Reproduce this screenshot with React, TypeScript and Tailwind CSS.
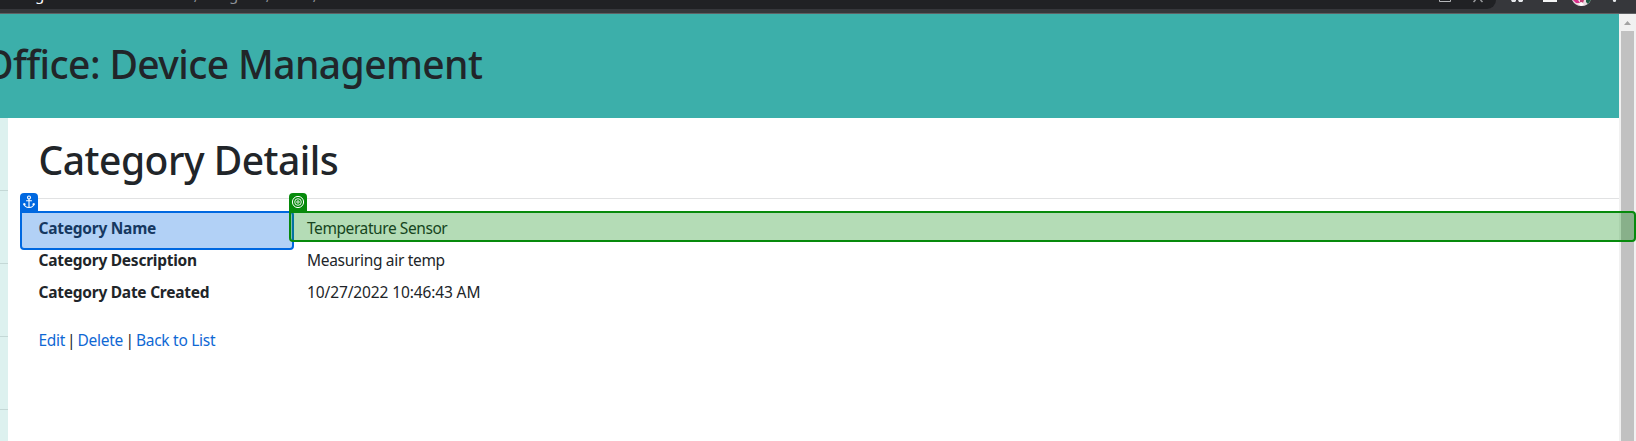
const rows = [
  { label: 'Category Name', value: 'Temperature Sensor', tracking: 'tracking-[-0.42px]' },
  { label: 'Category Description', value: 'Measuring air temp', tracking: 'tracking-[-0.32px]' },
  { label: 'Category Date Created', value: '10/27/2022 10:46:43 AM', tracking: 'tracking-[-0.12px]' },
];

function BrowserBar() {
  return (
    <div className="relative h-[14px] w-full shrink-0 overflow-hidden border-b border-[#5f6164] bg-[#36373b]">
      <div className="h-[9px] w-[1496px] rounded-br-[12px] bg-[#202124]" />
      <span className="absolute left-[35px] top-[-15px] text-[15px] leading-[18px] text-white">g</span>
      <span className="absolute left-[194px] top-[-12px] text-[14px] leading-[18px] text-[#8f9297]">/</span>
      <span className="absolute left-[229px] top-[-15px] text-[15px] leading-[18px] text-[#8f9297]">g</span>
      <span className="absolute left-[266px] top-[-12px] text-[14px] leading-[18px] text-[#8f9297]">/</span>
      <span className="absolute left-[313px] top-[-12px] text-[14px] leading-[18px] text-[#8f9297]">/</span>
      <svg className="absolute left-[1400px] top-0" width="236" height="13" viewBox="0 0 236 13">
        <path d="M39.5 0V1.5H50.5V0" fill="none" stroke="#b4b6b9" />
        <path d="M73.500 2L75.500 0M82.500 2L80.500 0" fill="none" stroke="#9a9c9f" strokeWidth="1.500" />
        <path d="M111 0H116V1L115 2H112ZM118 0H123V1L122 2H119Z" fill="#e8eaed" />
        <path d="M143 0H157V2H143Z" fill="#f4f5f6" />
        <path d="M172 0H191Q188 6 181.500 6Q175 6 172 0Z" fill="#e8d9df" />
        <path d="M173 0H178L180 3L176 3Z" fill="#d92f8b" />
        <path d="M180 0H184L183 3L180 2Z" fill="#c33b72" />
        <path d="M186 0H191L188 4L186 2Z" fill="#1d5a42" />
        <path d="M178 4L182 2L184 5L181 6Z" fill="#fff" />
        <circle cx="214.500" cy="0.500" r="1.600" fill="#e8eaed" />
      </svg>
    </div>
  );
}

function AnchorIcon() {
  return (
    <svg width="14" height="14" viewBox="0 0 14 14" fill="none" stroke="#fff" strokeWidth="1.100" strokeLinecap="round" strokeLinejoin="round">
      <circle cx="7" cy="2.500" r="1.500" />
      <path d="M7 4V12.500M4.500 5.700H9.500M2 8.500C2.300 11 4.500 12.500 7 12.500S11.700 11 12 8.500M1.700 9.700L2 8.500L3.200 9.200M12.300 9.700L12 8.500L10.800 9.200" />
    </svg>
  );
}

function TargetIcon() {
  return (
    <svg width="14" height="14" viewBox="0 0 14 14" fill="none" stroke="#fff">
      <circle cx="7" cy="7" r="5.600" strokeWidth="1" />
      <circle cx="7" cy="7" r="3.300" strokeWidth="0.900" />
      <circle cx="7" cy="7" r="1.200" strokeWidth="0.900" />
    </svg>
  );
}

export default function App() {
  return (
    <div className="relative flex h-[441px] w-[1636px] flex-col overflow-hidden bg-white font-['Noto_Sans',sans-serif] text-[15.5px] text-[#212529]">
      <BrowserBar />
      <div className="flex min-h-0 flex-1">
        <div className="flex min-w-0 flex-1 flex-col">
          <header className="flex h-[104px] shrink-0 items-start overflow-hidden bg-[#3cafaa]">
            <h1 className="-ml-[17px] mt-[26px] whitespace-nowrap text-[39px] font-medium leading-[48px] tracking-[-0.6px]">
              Office: Device Management
            </h1>
          </header>
          <div className="flex min-h-0 flex-1">
            <aside className="w-2 shrink-0 overflow-hidden bg-[#ddf1ef] pt-[72px]">
              {[0, 1, 2, 3].map((n) => (
                <div key={n} className="mb-[72px] h-px bg-[#c4d8d6]" />
              ))}
            </aside>
            <main className="flex-1 pl-[30.500px]">
              <h2 className="mt-[18px] text-[39px] font-medium leading-[48px] tracking-[-0.5px]">Category Details</h2>
              <hr className="-ml-[0.500px] mt-[14px] border-[#e1e2e3]" />
              <dl className="mt-[17px]">
                {rows.map((row) => (
                  <div key={row.label} className="flex h-8 leading-6">
                    <dt className="w-[268.500px] font-bold tracking-[-0.25px]">{row.label}</dt>
                    <dd className={row.tracking}>{row.value}</dd>
                  </div>
                ))}
              </dl>
              <div className="mt-4 flex leading-6 tracking-[-0.28px] text-[#0f68d4]">
                <a className="w-[28.500px]">Edit</a>
                <span className="w-[10.500px] text-[#212529]">|</span>
                <a className="w-[48px]">Delete</a>
                <span className="w-[10.500px] text-[#212529]">|</span>
                <a>Back to List</a>
              </div>
            </main>
          </div>
        </div>
        <div className="flex w-[17px] shrink-0 flex-col bg-[#f1f1f1]">
          <div className="flex h-[17px] items-center justify-center">
            <svg width="7" height="4" viewBox="0 0 7 4">
              <path d="M3.500 0L7 4H0Z" fill="#a3a3a3" />
            </svg>
          </div>
          <div className="mx-[2px] flex-1 bg-[#c1c1c1]" />
        </div>
      </div>

      <div className="absolute left-[20px] top-[211px] h-[39px] w-[274px] rounded-b-[4px] rounded-tr-[4px] border-2 border-[#0068e0] bg-[#0068e0]/30" />
      <div className="absolute left-[20px] top-[193px] flex h-[18px] w-[18px] items-center justify-center rounded-t-[4px] bg-[#0068e0]">
        <AnchorIcon />
      </div>
      <div className="absolute left-[289px] top-[211px] h-[31px] w-[1347px] rounded-b-[4px] rounded-tr-[4px] border-2 border-[#078a0c] bg-[#078a0c]/30" />
      <div className="absolute left-[289px] top-[193px] flex h-[18px] w-[18px] items-center justify-center rounded-t-[4px] bg-[#078a0c]">
        <TargetIcon />
      </div>
    </div>
  );
}
